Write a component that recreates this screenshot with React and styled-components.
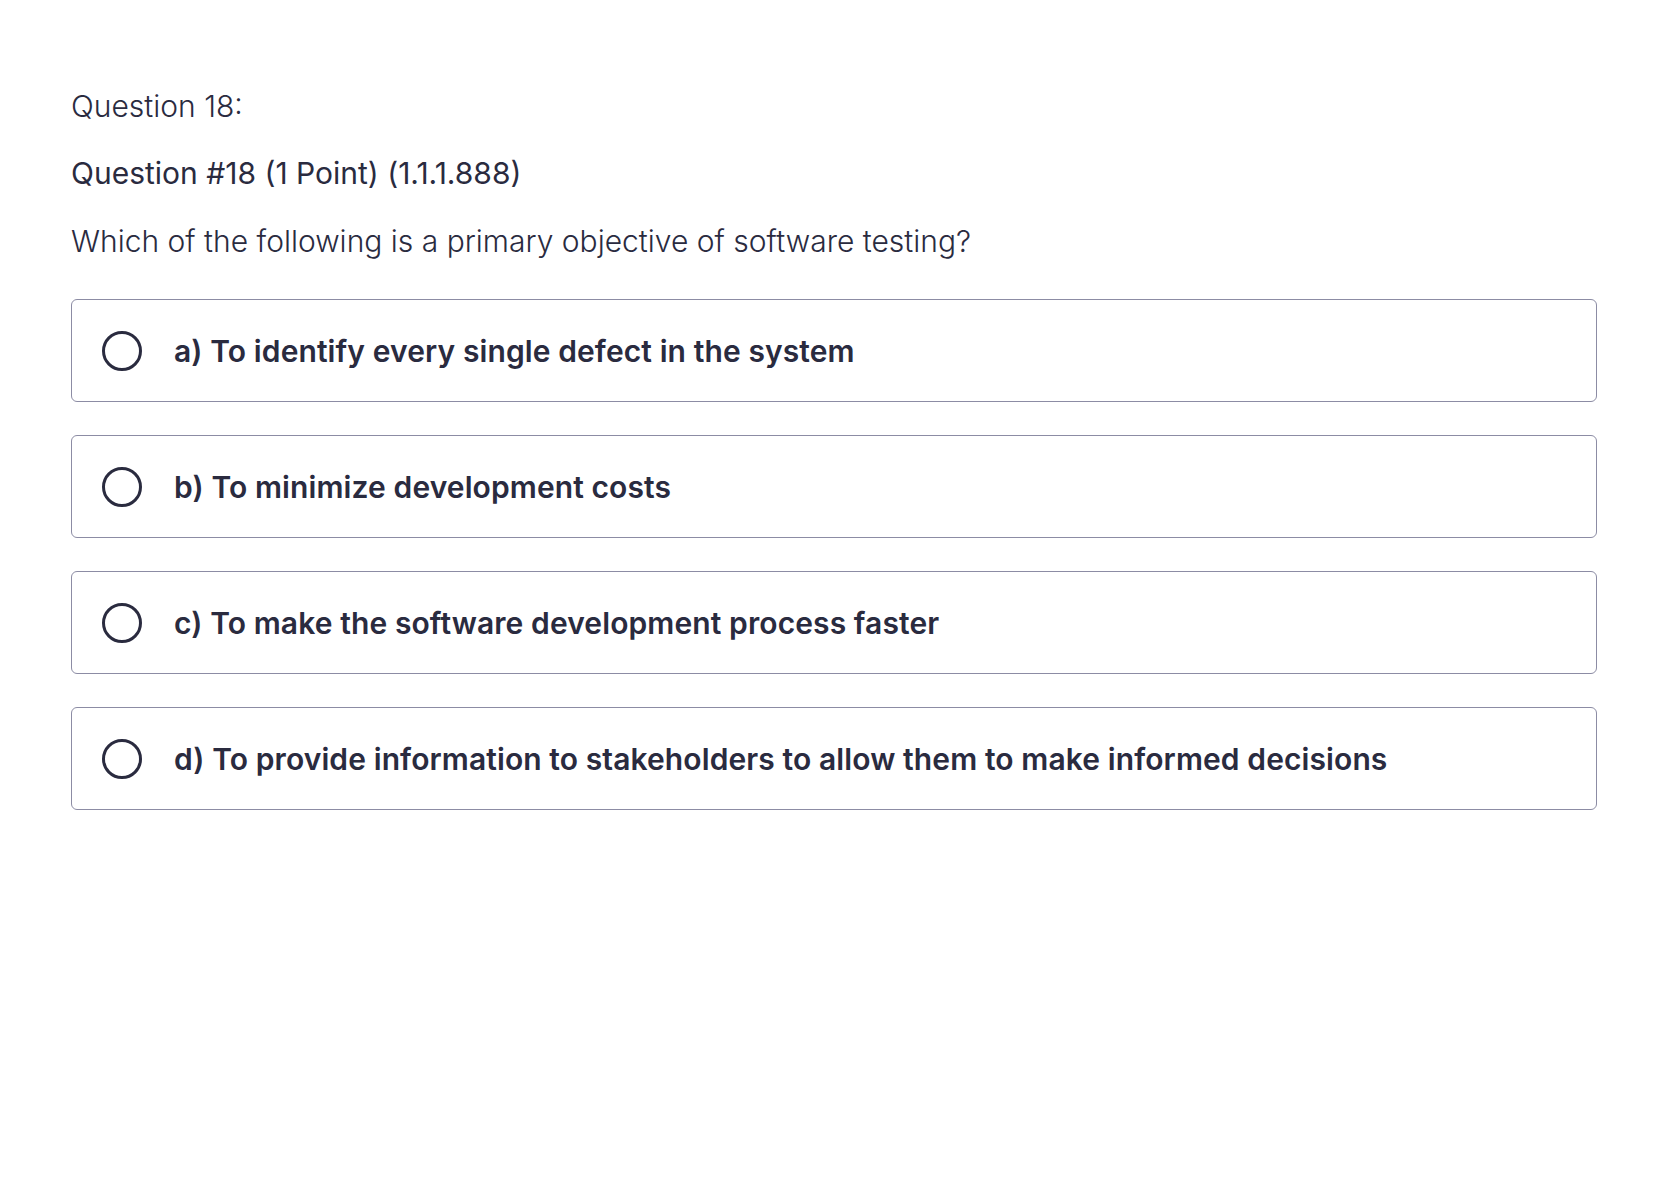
import React from "react";
import styled, { createGlobalStyle } from "styled-components";

const GlobalStyle = createGlobalStyle`
  body {
    margin: 0;
    background: #fff;
    font-family: Inter, "Noto Sans", sans-serif;
    color: #2a2b3f;
  }
`;

const Page = styled.div`
  padding: 84px 63px 0 71px;
`;

const Title = styled.div`
  font-size: 30px;
  font-weight: 300;
  line-height: 44px;
  margin-bottom: 23px;
`;

const Subtitle = styled.div`
  font-size: 30px;
  font-weight: 400;
  line-height: 44px;
  margin-bottom: 24px;
`;

const Prompt = styled.div`
  font-size: 30px;
  font-weight: 300;
  line-height: 44px;
  margin-bottom: 36px;
`;

const Options = styled.div`
  display: flex;
  flex-direction: column;
  gap: 33px;
`;

const Option = styled.label`
  display: flex;
  align-items: center;
  gap: 32px;
  height: 103px;
  box-sizing: border-box;
  padding: 0 30px;
  border: 1.5px solid #8c8ca4;
  border-radius: 6px;
  cursor: pointer;
`;

const Radio = styled.span`
  flex: none;
  width: 40px;
  height: 40px;
  box-sizing: border-box;
  border: 3.5px solid #2a2b3f;
  border-radius: 50%;
`;

const OptionText = styled.span`
  font-size: 30px;
  font-weight: 600;
  letter-spacing: 0.1px;
`;

const options = [
  "a) To identify every single defect in the system",
  "b) To minimize development costs",
  "c) To make the software development process faster",
  "d) To provide information to stakeholders to allow them to make informed decisions",
];

export default function App() {
  return (
    <Page>
      <GlobalStyle />
      <Title>Question 18:</Title>
      <Subtitle>Question #18 (1 Point) (1.1.1.888)</Subtitle>
      <Prompt>Which of the following is a primary objective of software testing?</Prompt>
      <Options>
        {options.map((o) => (
          <Option key={o}>
            <Radio />
            <OptionText>{o}</OptionText>
          </Option>
        ))}
      </Options>
    </Page>
  );
}
